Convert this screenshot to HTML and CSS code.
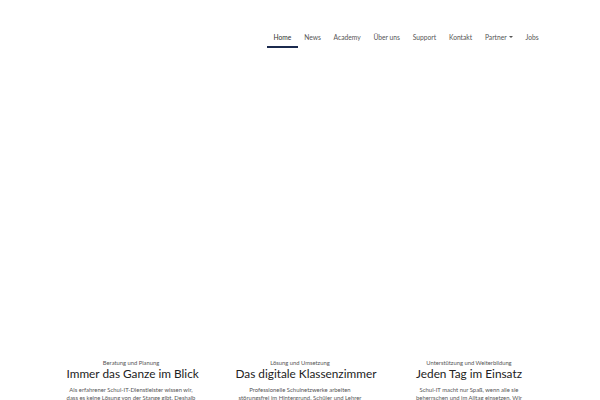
FILE: index.html
```html
<!DOCTYPE html>
<html lang="de">
<head>
<meta charset="utf-8">
<title>Schul-IT</title>
<link rel="stylesheet" href="styles.css">
</head>
<body>
<header class="topbar">
  <nav class="nav">
    <a class="nav-item active" href="#">Home</a>
    <a class="nav-item" href="#">News</a>
    <a class="nav-item" href="#">Academy</a>
    <a class="nav-item" href="#">Über uns</a>
    <a class="nav-item" href="#">Support</a>
    <a class="nav-item" href="#">Kontakt</a>
    <a class="nav-item" href="#">Partner <span class="caret"></span></a>
    <a class="nav-item" href="#">Jobs</a>
  </nav>
</header>
<main class="hero"></main>
<section class="features">
  <div class="feature">
    <div class="kicker">Beratung und Planung</div>
    <h2 class="title">Immer das Ganze im Blick</h2>
    <p class="text">Als erfahrener Schul-IT-Dienstleister wissen wir, dass es keine Lösung von der Stange gibt. Deshalb</p>
  </div>
  <div class="feature">
    <div class="kicker">Lösung und Umsetzung</div>
    <h2 class="title">Das digitale Klassenzimmer</h2>
    <p class="text">Professionelle Schulnetzwerke arbeiten störungsfrei im Hintergrund. Schüler und Lehrer</p>
  </div>
  <div class="feature">
    <div class="kicker">Unterstützung und Weiterbildung</div>
    <h2 class="title">Jeden Tag im Einsatz</h2>
    <p class="text">Schul-IT macht nur Spaß, wenn alle sie beherrschen und im Alltag einsetzen. Wir</p>
  </div>
</section>
</body>
</html>
```
FILE: styles.css
```css
html, body {
  margin: 0;
  padding: 0;
  background: #ffffff;
  font-family: Lato, "Noto Sans", sans-serif;
  color: #444;
  overflow: hidden;
}
.topbar {
  display: flex;
  justify-content: flex-end;
  padding: 0 55px 0 0;
  height: 48px;
}
.nav {
  display: flex;
  align-items: stretch;
  padding-top: 31px;
}
.nav-item {
  display: flex;
  align-items: flex-start;
  padding: 2px 6.4px 0;
  font-size: 6.7px;
  color: #555555;
  text-decoration: none;
  height: 17px;
  box-sizing: border-box;
  border-bottom: 2px solid transparent;
}
.nav-item.active {
  color: #333333;
  border-bottom-color: #1b2a4e;
}
.caret {
  display: inline-block;
  width: 0;
  height: 0;
  margin: 3.3px 0 0 2px;
  border-left: 2px solid transparent;
  border-right: 2px solid transparent;
  border-top: 2px solid #555;
}
.hero {
  height: 311px;
}
.features {
  width: 507px;
  margin: 0 auto;
  display: grid;
  grid-template-columns: repeat(3, 1fr);
}
.feature {
  text-align: center;
  padding: 0 20px;
  min-width: 0;
}
.kicker {
  font-size: 5.8px;
  color: #555;
  line-height: 8px;
}
.title {
  margin: 0;
  font-size: 11.8px;
  font-weight: 400;
  color: #222;
  line-height: 14px;
  white-space: nowrap;
}
.text {
  margin: 5px 0 0;
  font-size: 5.9px;
  line-height: 8px;
  color: #555;
}
```
